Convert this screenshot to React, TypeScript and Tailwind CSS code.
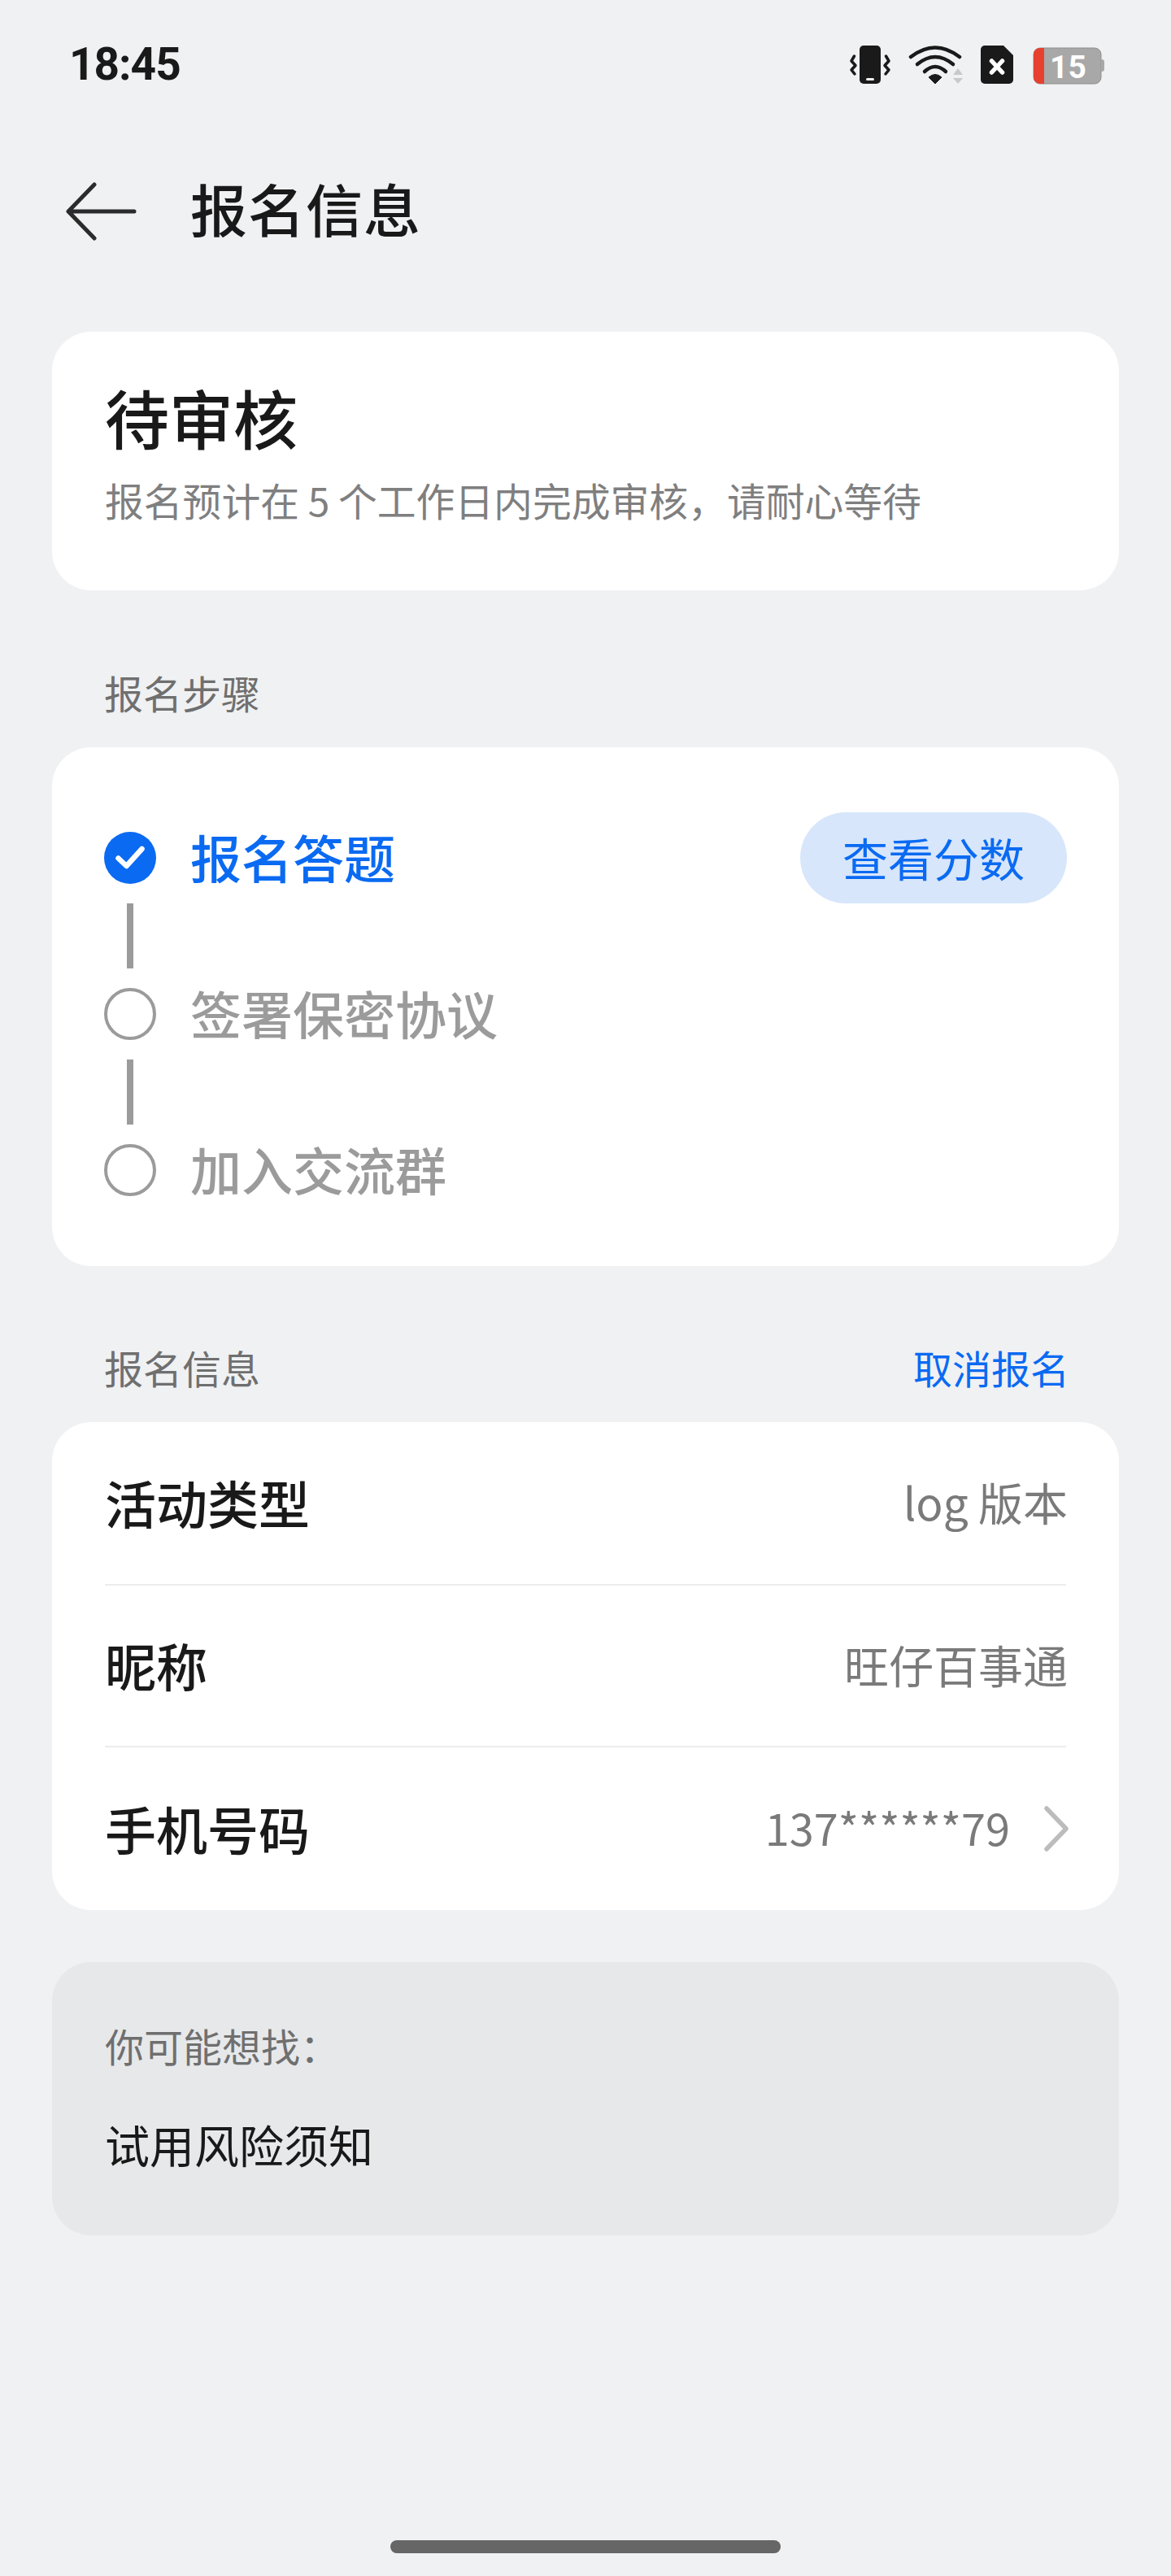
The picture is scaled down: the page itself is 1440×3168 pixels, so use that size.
const font = { fontFamily: '"Noto Sans CJK SC", "Noto Sans", sans-serif' };

function StatusIcons() {
  return (
    <svg width="320" height="60" viewBox="1040 49 320 60" className="block shrink-0">
      <g fill="none" stroke="#1a1a1a" strokeWidth="3.5" strokeLinecap="round" strokeLinejoin="round">
        <path d="M1050.500 69l-3.500 6 5 5.500-5 5.500 4 5" />
        <path d="M1089.500 69l3.500 6-5 5.500 5 5.500-4 5" />
      </g>
      <rect x="1057" y="56" width="26" height="47" rx="5" fill="#1a1a1a" />
      <rect x="1065" y="96" width="10" height="3" rx="1.500" fill="#f0f1f3" />
      <g fill="none" stroke="#1a1a1a" strokeWidth="4.500" strokeLinecap="round">
        <path d="M1120 70Q1150 47 1180 70" />
        <path d="M1128 79Q1150 61 1172 79" />
        <path d="M1137 88Q1150 76 1163 88" />
      </g>
      <path d="M1142 95Q1150 88 1158 95L1150 103Z" fill="#1a1a1a" stroke="#1a1a1a" strokeWidth="1" strokeLinejoin="round" />
      <path d="M1178 84l6 8h-12zM1172 96h12l-6 7z" fill="#c8c9cb" />
      <path d="M1206 61a5 5 0 0 1 5-5h23l12 12v30a5 5 0 0 1-5 5h-30a5 5 0 0 1-5-5z" fill="#1a1a1a" />
      <path d="M1219.500 75l13 14M1232.500 75l-13 14" stroke="#fff" strokeWidth="5.500" strokeLinecap="round" />
      <rect x="1271" y="59" width="83" height="44" rx="8" fill="#a8a8a8" stroke="#8e8e8e" strokeWidth="1" />
      <path d="M1279 59h5v44h-5a8 8 0 0 1-8-8V67a8 8 0 0 1 8-8z" fill="#e8402f" />
      <path d="M1354 73h1a3 3 0 0 1 3 3v9a3 3 0 0 1-3 3h-1z" fill="#a8a8a8" />
      <text x="1291" y="96" fontSize="39" fontWeight="700" fill="#fff" fontFamily="Roboto, sans-serif">15</text>
    </svg>
  );
}

function StepIcon({ done }: { done?: boolean }) {
  if (done) {
    return (
      <svg width="64" height="64" viewBox="0 0 64 64" className="shrink-0">
        <circle cx="32" cy="32" r="32" fill="#0a6af2" />
        <path d="M17.500 32.500l10 9.500 19-21" fill="none" stroke="#fff" strokeWidth="6.500" strokeLinecap="round" strokeLinejoin="round" />
      </svg>
    );
  }
  return <div className="h-16 w-16 shrink-0 rounded-full border-4 border-[#9b9b9b]" />;
}

function Connector() {
  return <div className="ml-[28px] h-20 w-2 bg-[#9b9b9b]" />;
}

function Row({ label, value, chevron, className }: { label: string; value: string; chevron?: boolean; className: string }) {
  return (
    <div className={`flex items-center justify-between ${className}`}>
      <span className="pb-[4px] text-[63px] font-medium leading-none text-[#191919]">{label}</span>
      <span className={`flex items-center leading-none text-[#7a7a7a] ${chevron ? "-mr-[5px] text-[54px]" : "-mr-[2px] text-[55px]"}`}>
        <span className="pb-[4px]">{value}</span>
        {chevron && (
          <svg width="34" height="56" viewBox="0 0 34 56" className="ml-[40px]">
            <path d="M5 3l24 25-24 25" fill="none" stroke="#bcbcbc" strokeWidth="5.500" strokeLinecap="round" strokeLinejoin="round" />
          </svg>
        )}
      </span>
    </div>
  );
}

export default function App() {
  return (
    <div className="flex h-[3168px] w-[1440px] flex-col overflow-hidden bg-[#f0f1f3]" style={font}>
      <div className="flex h-[158px] items-center justify-between pl-[85px] pr-[80px]">
        <span className="text-[55px] font-bold leading-none tracking-[-1px] text-[#191919]" style={{ fontFamily: "Roboto, sans-serif" }}>18:45</span>
        <StatusIcons />
      </div>

      <div className="mt-12 flex h-[100px] items-center pl-[80px]">
        <svg width="88" height="72" viewBox="0 0 88 72" className="mt-2 shrink-0">
          <path d="M85 36H4M36 3L4 36l32 33" fill="none" stroke="#2b2b2b" strokeWidth="5" strokeLinecap="round" strokeLinejoin="round" />
        </svg>
        <h1 className="ml-[66px] text-[70px] font-medium leading-none tracking-[1px] text-[#191919]">报名信息</h1>
      </div>

      <div className="mx-16 mt-[102px] flex h-[318px] flex-col rounded-[48px] bg-white px-[65px] pt-[65px]">
        <div className="text-[79px] font-medium leading-none text-[#191919]">待审核</div>
        <div className="mt-[39px] whitespace-nowrap text-[47.800px] leading-none text-[#7f7f7f]">报名预计在 5 个工作日内完成审核，请耐心等待</div>
      </div>

      <div className="ml-[128px] mt-[101px] h-[92px] text-[48px] leading-none text-[#6f6f6f]">报名步骤</div>

      <div className="mx-16 flex h-[638px] flex-col rounded-[48px] bg-white px-[64px] pt-[80px]">
        <div className="flex h-[112px] items-center justify-between">
          <div className="flex items-center">
            <StepIcon done />
            <span className="ml-[42px] pb-[6px] text-[63px] font-medium leading-none text-[#0a6af2]">报名答题</span>
          </div>
          <span className="flex h-[112px] w-[328px] items-center justify-center rounded-full bg-[#d7e6fb] pb-[2px] text-[56px] leading-none text-[#0a6af2]">查看分数</span>
        </div>
        <Connector />
        <div className="flex h-[112px] items-center">
          <StepIcon />
          <span className="ml-[42px] pb-[6px] text-[63px] font-medium leading-none text-[#9b9b9b]">签署保密协议</span>
        </div>
        <Connector />
        <div className="flex h-[112px] items-center">
          <StepIcon />
          <span className="ml-[42px] pb-[6px] text-[63px] font-medium leading-none text-[#9b9b9b]">加入交流群</span>
        </div>
      </div>

      <div className="ml-[128px] mr-[125px] mt-[100px] flex h-[92px] justify-between text-[48px] leading-none">
        <span className="text-[#6f6f6f]">报名信息</span>
        <span className="text-[#0a6af2]">取消报名</span>
      </div>

      <div className="mx-16 flex h-[600px] flex-col rounded-[48px] bg-white px-[65px]">
        <Row label="活动类型" value="log 版本" className="h-[201px] border-b-2 border-[#ececec]" />
        <Row label="昵称" value="旺仔百事通" className="h-[199px] border-b-2 border-[#ececec]" />
        <Row label="手机号码" value="137******79" chevron className="h-[200px]" />
      </div>

      <div className="mx-16 mt-16 flex h-[336px] flex-col rounded-[48px] bg-[#e7e8ea] px-[65px] pt-[78px]">
        <div className="text-[48px] leading-none text-[#6f6f6f]">你可能想找：</div>
        <div className="mt-[70px] text-[55px] leading-none text-[#191919]">试用风险须知</div>
      </div>

      <div className="mx-auto mb-[28px] mt-auto h-4 w-[480px] rounded-full bg-[#666666]" />
    </div>
  );
}
